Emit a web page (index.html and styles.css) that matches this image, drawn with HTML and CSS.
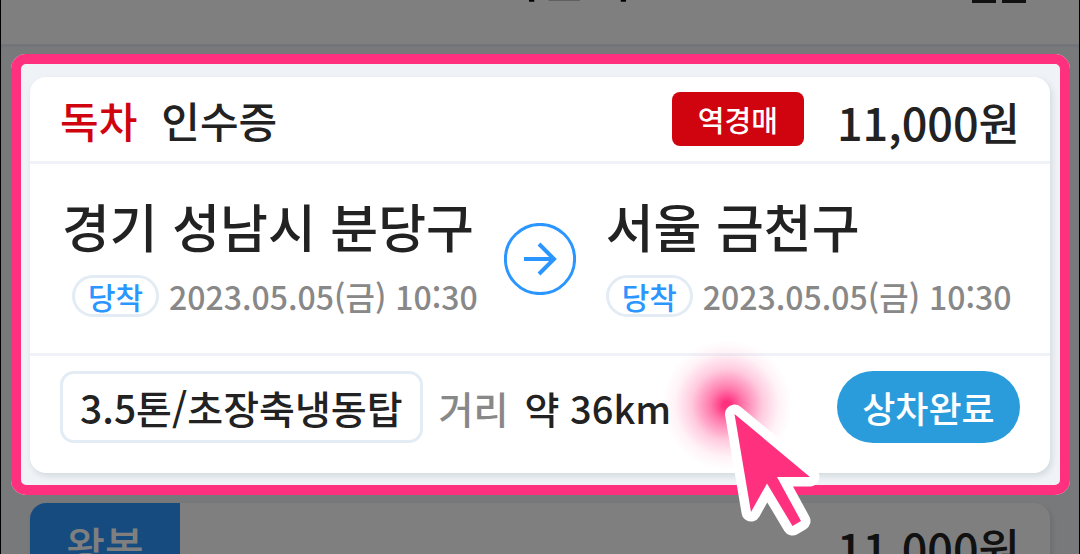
FILE: index.html
```html
<!DOCTYPE html>
<html lang="ko">
<head>
    <meta charset="UTF-8">
    <meta name="viewport" content="width=device-width, initial-scale=1.0">
    <title>오더관리</title>
    <link rel="stylesheet" href="styles.css">
</head>
<body>
    <div class="app">
        <header class="top">
            <h1>오더관리</h1>
            <button type="button" class="menu" aria-label="메뉴"><i></i><i></i></button>
        </header>
        <main class="list">
            <article class="card">
                <div class="card-head">
                    <strong class="kind">독차</strong>
                    <span class="receipt">인수증</span>
                    <span class="auction">역경매</span>
                    <span class="price">11,000원</span>
                </div>
                <div class="route">
                    <div class="place">
                        <h2>경기 성남시 분당구</h2>
                        <p><span class="badge">당착</span><time>2023.05.05(금) 10:30</time></p>
                    </div>
                    <svg class="arrow" viewBox="0 0 72 72">
                        <circle cx="36" cy="36" r="34.6"/>
                        <path d="M20 36H50M35 21L50 36L35 51"/>
                    </svg>
                    <div class="place">
                        <h2>서울 금천구</h2>
                        <p><span class="badge">당착</span><time>2023.05.05(금) 10:30</time></p>
                    </div>
                </div>
                <div class="card-foot">
                    <span class="truck">3.5톤/초장축냉동탑</span>
                    <span class="label">거리</span>
                    <span class="distance">약 36km</span>
                    <button type="button" class="done">상차완료</button>
                </div>
            </article>
            <article class="card next">
                <div class="card-head">
                    <strong class="round">왕복</strong>
                    <span class="price">11,000원</span>
                </div>
            </article>
        </main>
        <!-- guide overlay -->
        <div class="focus"></div>
        <div class="tap"></div>
        <svg class="cursor" viewBox="0 0 100 140">
            <path d="M14.500 14L90 77H57L81 121L72.500 126L47 83.500L31 112Z"/>
            <path class="fill" d="M14.500 14L90 77H57L81 121L72.500 126L47 83.500L31 112Z"/>
        </svg>
    </div>
</body>
</html>
```

FILE: styles.css
```css
*{
    margin: 0;
    padding: 0;
    box-sizing: border-box;
}
html,body{
    height: 100%;
}
body{
    font-family: "Noto Sans CJK KR", sans-serif;
    font-weight: 500;
    color: #222;
    background: #eff3f7;
}
button{
    font: inherit;
    border: 0;
    cursor: pointer;
}
h1,h2,strong{
    font-weight: 500;
}
.app{
    position: relative;
    height: 100vh;
    overflow: hidden;
    border: solid #000;
    border-width: 0 1px;
}
.top{
    position: relative;
    display: flex;
    align-items: flex-end;
    justify-content: center;
    height: 47px;
    padding-bottom: 41px;
    background: #fff;
    border-bottom: 3px solid #e3e8f3;
}
.top h1{
    font-size: 50px;
    line-height: 56px;
    color: #000;
}
.menu{
    position: absolute;
    right: 53px;
    bottom: 41px;
    display: flex;
    gap: 6px;
    background: none;
}
.menu i{
    width: 24px;
    height: 24px;
    border: 3px solid #222;
}
.list{
    display: flex;
    flex-direction: column;
    gap: 30px;
    padding: 30px 29px 0;
}
.card{
    background: #fff;
    border-radius: 16px;
    box-shadow: 2px 3px 6px rgba(0,30,50,.12);
}
.card-head{
    display: flex;
    align-items: center;
    height: 87px;
    padding: 0 30px;
    border-bottom: 3px solid #eff3f7;
    font-size: 42px;
}
.kind{
    margin-right: 24px;
    color: #d0040f;
}
.auction{
    margin-left: auto;
    width: 132px;
    font-size: 29px;
    line-height: 54px;
    text-align: center;
    color: #fff;
    background: #d0040f;
    border-radius: 8px;
}
.price{
    margin-left: 33px;
    padding-top: 4px;
    font-size: 45px;
}
.route{
    display: flex;
    align-items: flex-start;
    height: 192px;
    padding: 24px 32px 0;
    border-bottom: 3px solid #eff3f7;
}
.place{
    white-space: nowrap;
}
.place h2{
    font-size: 52px;
    line-height: 76px;
}
.place p{
    display: flex;
    align-items: center;
    gap: 10px;
    font-size: 32px;
    line-height: 64px;
    color: #888;
}
.place:first-child p{
    padding-left: 10px;
}
.badge{
    width: 87px;
    height: 42px;
    font-size: 30px;
    line-height: 36px;
    text-align: center;
    color: #2b96ff;
    border: 3px solid #e3ecf5;
    border-radius: 21px;
}
.arrow{
    flex: none;
    width: 72px;
    height: 72px;
    margin: 35px 30px 0 26px;
    fill: none;
    stroke: #2b96ff;
    stroke-width: 3;
}
.arrow path{
    stroke-width: 4;
}
.card-foot{
    display: flex;
    align-items: center;
    height: 117px;
    padding: 0 30px 15px;
    font-size: 39px;
}
.truck{
    padding: 0 17px;
    line-height: 66px;
    border: 3px solid #e3ecf5;
    border-radius: 14px;
}
.label{
    margin: 0 16px;
    font-size: 38px;
    color: #888;
}
.distance{
    font-size: 38px;
}
.done{
    margin-left: auto;
    width: 183px;
    height: 72px;
    font-size: 36px;
    color: #fff;
    background: #2a9cdc;
    border-radius: 36px;
}
.next{
    overflow: hidden;
}
.next .card-head{
    justify-content: space-between;
    padding-left: 0;
}
.round{
    width: 150px;
    line-height: 84px;
    text-align: center;
    color: #fff;
    background: #2b96ff;
}
/* dims everything outside of the frame */
.focus{
    position: absolute;
    top: 54px;
    left: 10px;
    right: 9px;
    height: 441px;
    border: 10px solid #ff317f;
    border-radius: 15px;
    box-shadow: 0 0 0 600px rgba(0,0,0,.5);
}
.tap{
    position: absolute;
    top: 340px;
    left: 661px;
    width: 130px;
    height: 130px;
    border-radius: 50%;
    background: radial-gradient(closest-side, #ff317f 6%, rgba(255,49,127,.65) 25%, rgba(255,49,127,.25) 55%, rgba(255,49,127,.06) 80%, rgba(255,49,127,0));
}
.cursor{
    position: absolute;
    top: 400px;
    left: 719px;
    width: 100px;
    height: 140px;
    fill: #fff;
    stroke: #fff;
    stroke-width: 19;
    stroke-linejoin: round;
}
.cursor .fill{
    fill: #ff317f;
    stroke: none;
}
```
